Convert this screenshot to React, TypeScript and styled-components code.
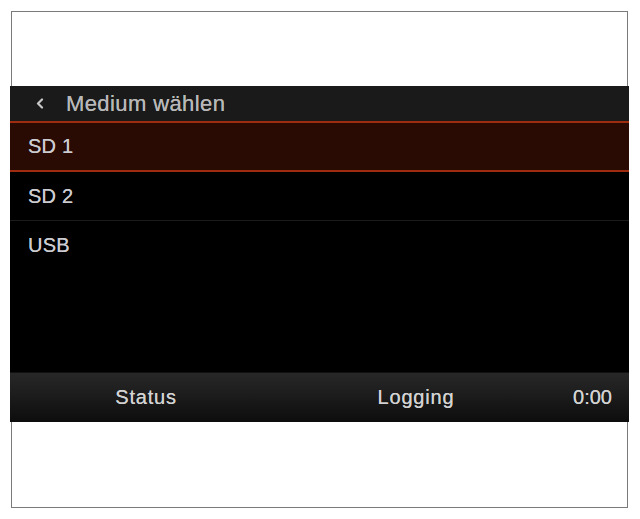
import React from 'react';
import styled, { createGlobalStyle } from 'styled-components';

const GlobalStyle = createGlobalStyle`
  html, body {
    margin: 0;
    padding: 0;
    background: #ffffff;
  }
  body {
    font-family: 'Liberation Sans', Arial, sans-serif;
  }
`;

interface MediumItem {
  id: string;
  label: string;
}

const media: MediumItem[] = [
  { id: 'sd1', label: 'SD 1' },
  { id: 'sd2', label: 'SD 2' },
  { id: 'usb', label: 'USB' },
];

export default function App() {
  const selected = 'sd1';

  return (
    <>
      <GlobalStyle />
      <Frame>
        <Screen>
          <Header>
            <BackIcon viewBox='0 0 8 11'>
              <path d='M6 1.5 L2 5.5 L6 9.5' />
            </BackIcon>
            <Title>Medium wählen</Title>
          </Header>
          <List>
            {media.map((item) => (
              <Row key={item.id} $active={item.id === selected}>
                {item.label}
              </Row>
            ))}
          </List>
          <Footer>
            <FooterCell $width={272}>Status</FooterCell>
            <FooterCell $width={268}>Logging</FooterCell>
            <Clock>0:00</Clock>
          </Footer>
        </Screen>
      </Frame>
    </>
  );
}

const Frame = styled.div`
  box-sizing: border-box;
  margin: 11px 0 0 11px;
  width: 617px;
  height: 497px;
  border: 1px solid #7a7a7a;
  background: #ffffff;
  padding-top: 74px;
`;

const Screen = styled.div`
  margin: 0 -2px 0 -2px;
  background: #000000;
  display: flex;
  flex-direction: column;
  height: 336px;
`;

const Header = styled.div`
  height: 35px;
  background: #1a1a1a;
  display: flex;
  align-items: center;
  padding-left: 26px;
  gap: 22px;
`;

const BackIcon = styled.svg`
  width: 8px;
  height: 11px;
  fill: none;
  stroke: #c8c8c8;
  stroke-width: 2.2;
  stroke-linecap: round;
  stroke-linejoin: round;
`;

const Title = styled.span`
  font-size: 22px;
  letter-spacing: 0.4px;
  color: #b8b8b8;
  text-shadow: 0 0 0.6px #b8b8b8;
`;

const List = styled.div`
  flex: 1;
  display: flex;
  flex-direction: column;
`;

const Row = styled.div<{ $active: boolean }>`
  box-sizing: border-box;
  height: ${({ $active }) => ($active ? '51px' : '49px')};
  display: flex;
  align-items: center;
  padding-left: 18px;
  font-size: 20px;
  letter-spacing: 0.2px;
  color: #cbcbd0;
  text-shadow: 0 0 0.6px #cbcbd0;
  background: ${({ $active }) => ($active ? '#290b03' : '#000000')};
  border-top: ${({ $active }) => ($active ? '2px solid #a02c10' : 'none')};
  border-bottom: ${({ $active }) => ($active ? '2px solid #a02c10' : '1px solid #1a1a1a')};

  &:last-child {
    border-bottom: none;
  }
`;

const Footer = styled.div`
  height: 49px;
  display: flex;
  align-items: center;
  background: linear-gradient(to bottom, #272727 0%, #1c1c1c 45%, #0d0d0d 100%);
  border-top: 1px solid #111111;
  font-size: 20px;
  letter-spacing: 0.8px;
  color: #d2d2d2;
  text-shadow: 0 0 0.6px #d2d2d2;
`;

const FooterCell = styled.div<{ $width: number }>`
  width: ${({ $width }) => $width}px;
  text-align: center;
`;

const Clock = styled.div`
  flex: 1;
  text-align: right;
  padding-right: 17px;
  letter-spacing: 0;
`;
